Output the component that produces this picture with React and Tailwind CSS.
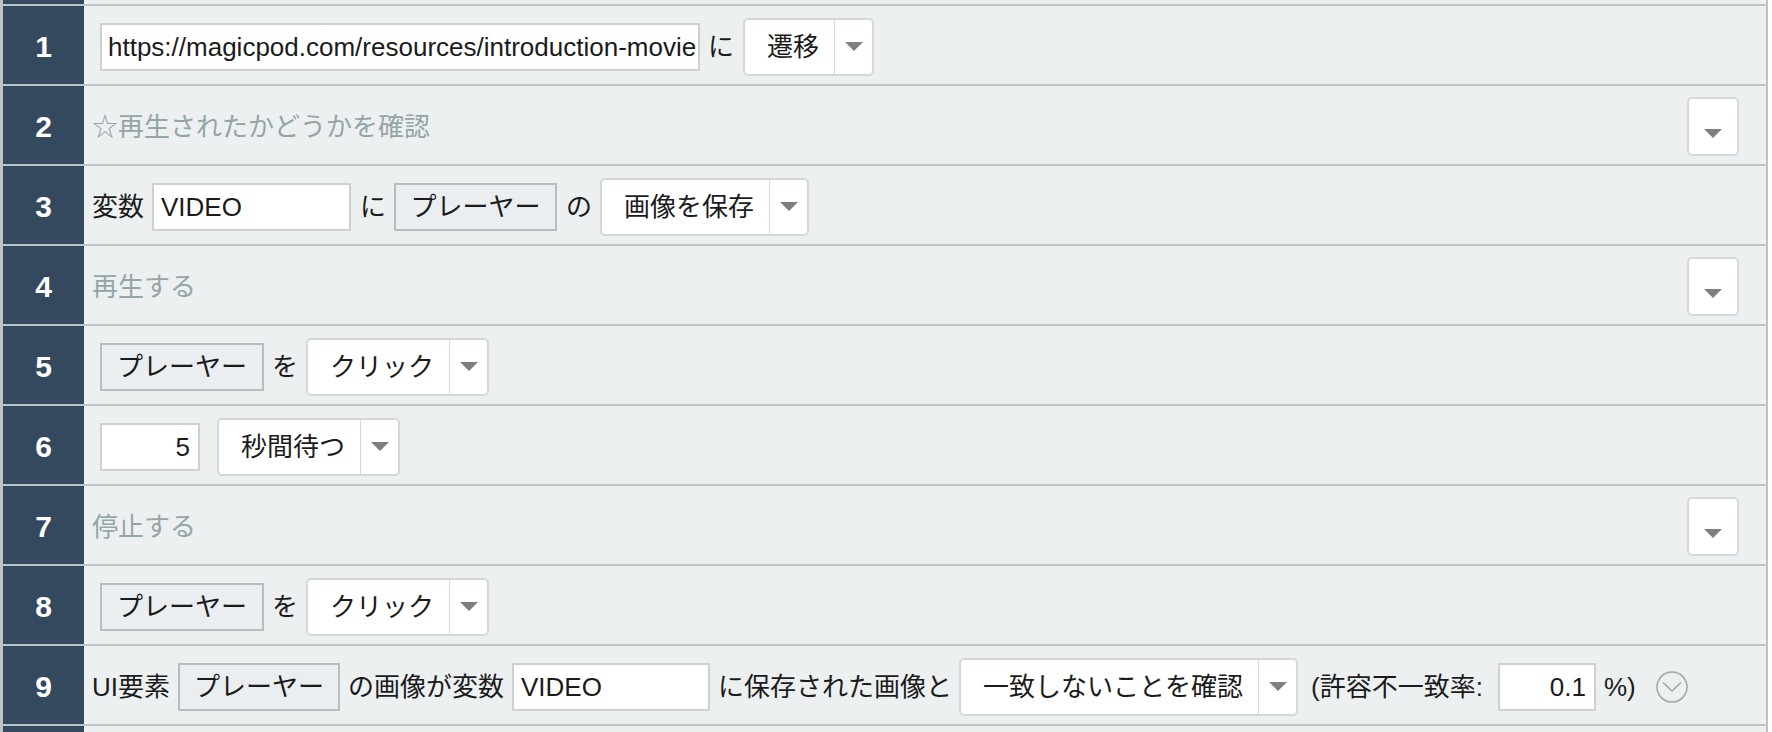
import React from "react";

function Tri() {
  return (
    <svg width="18" height="9" viewBox="0 0 18 9" className="block">
      <polygon points="0,0 18,0 9,9" fill="#7f7f7f" />
    </svg>
  );
}

function Select({ label, className = "" }) {
  return (
    <div className={"flex h-[58px] shrink-0 items-stretch rounded-[5px] border-2 border-[#d5d7d8] bg-white " + className}>
      <div className="flex items-center whitespace-nowrap pl-[22px] pr-[15px] text-[26px] leading-none text-[#1b1b1b]">{label}</div>
      <div className="flex w-[38px] items-center justify-center border-l border-[#d5d7d8]">
        <Tri />
      </div>
    </div>
  );
}

function Field({ children, className = "" }) {
  return (
    <div className={"flex h-[48px] shrink-0 items-center overflow-hidden whitespace-nowrap border-2 border-[#cdcfd0] bg-white text-[26px] leading-none text-[#1b1b1b] " + className}>
      {children}
    </div>
  );
}

function Elem({ children, className = "" }) {
  return (
    <div className={"flex h-[48px] w-[162px] shrink-0 items-center justify-center whitespace-nowrap border-2 border-[#b9bdbf] bg-[#eaeef0] text-[26px] leading-none text-[#1b1b1b] " + className}>
      {children}
    </div>
  );
}

function Label({ children, className = "" }) {
  return <span className={"shrink-0 whitespace-nowrap text-[26px] leading-none text-[#1b1b1b] " + className}>{children}</span>;
}

function Row({ n, children, className = "gap-[8px]" }) {
  return (
    <div className="flex h-[80px] border-t-2 border-[#bdc3c7]">
      <div className="flex w-[81px] shrink-0 items-center justify-center bg-[#34495e] pt-[3px] text-[30px] font-bold leading-none text-white">
        {n}
      </div>
      <div className={"flex min-w-0 flex-1 items-center bg-[#ecf0f1] pl-[8px] pt-[3px] " + className}>{children}</div>
    </div>
  );
}

function CommentRow({ n, text }) {
  return (
    <Row n={n}>
      <span className="shrink-0 whitespace-nowrap text-[26px] leading-none text-[#95a5a6]">{text}</span>
      <div className="ml-auto mr-[27px] flex h-[59px] w-[52px] shrink-0 items-center justify-center rounded-[5px] border-2 border-[#d5d7d8] bg-white">
        <div className="mt-[14px]">
          <Tri />
        </div>
      </div>
    </Row>
  );
}

function CircleChevron() {
  return (
    <svg width="32" height="32" viewBox="0 0 32 32" className="block">
      <circle cx="16" cy="16" r="15" fill="none" stroke="#a3a3a3" strokeWidth="1.5" />
      <polyline points="7,11.5 16,20 25,11.5" fill="none" stroke="#a3a3a3" strokeWidth="1.5" />
    </svg>
  );
}

export default function App() {
  return (
    <div className="min-h-[732px] w-[1772px] bg-white font-['Liberation_Sans','Noto_Sans_CJK_JP',sans-serif]">
      <div className="w-[1768px] border-l-[3px] border-r-2 border-[#bdc3c7]">
        <div className="flex h-[4px]">
          <div className="w-[81px] bg-[#34495e]" />
          <div className="flex-1 bg-[#ecf0f1]" />
        </div>

        <Row n="1">
          <Field className="ml-[8px] w-[600px] pl-[6px]">https://magicpod.com/resources/introduction-movie.</Field>
          <Label>に</Label>
          <Select label="遷移" className="ml-[1px]" />
        </Row>

        <CommentRow n="2" text="☆再生されたかどうかを確認" />

        <Row n="3">
          <Label>変数</Label>
          <Field className="w-[199px] pl-[7px]">VIDEO</Field>
          <Label className="ml-[1px]">に</Label>
          <Elem className="w-[163px]">プレーヤー</Elem>
          <Label className="ml-[1px]">の</Label>
          <Select label="画像を保存" />
        </Row>

        <CommentRow n="4" text="再生する" />

        <Row n="5">
          <Elem className="ml-[8px] w-[164px]">プレーヤー</Elem>
          <Label>を</Label>
          <Select label="クリック" />
        </Row>

        <Row n="6">
          <Field className="ml-[8px] w-[100px] justify-end pr-[8px]">5</Field>
          <Select label="秒間待つ" className="ml-[9px]" />
        </Row>

        <CommentRow n="7" text="停止する" />

        <Row n="8">
          <Elem className="ml-[8px] w-[164px]">プレーヤー</Elem>
          <Label>を</Label>
          <Select label="クリック" />
        </Row>

        <Row n="9">
          <Label>UI要素</Label>
          <Elem>プレーヤー</Elem>
          <Label>の画像が変数</Label>
          <Field className="w-[198px] pl-[7px]">VIDEO</Field>
          <Label>に保存された画像と</Label>
          <Select label="一致しないことを確認" className="-ml-[1px]" />
          <Label className="ml-[5px]">(許容不一致率:</Label>
          <Field className="ml-[7px] w-[98px] justify-end pr-[8px]">0.1</Field>
          <Label>%)</Label>
          <div className="ml-[12px] shrink-0">
            <CircleChevron />
          </div>
        </Row>

        <div className="flex h-[8px] border-t-2 border-[#bdc3c7]">
          <div className="w-[81px] bg-[#34495e]" />
          <div className="flex-1 bg-[#ecf0f1]" />
        </div>
      </div>
    </div>
  );
}
